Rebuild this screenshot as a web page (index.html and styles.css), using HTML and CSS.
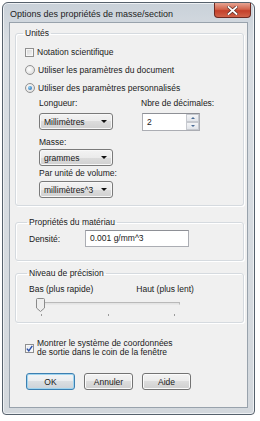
FILE: index.html
```html
<!DOCTYPE html>
<html lang="fr">
<head>
    <meta charset="UTF-8">
    <title>Options des propriétés de masse/section</title>
    <link rel="stylesheet" href="styles.css">
</head>
<body>
    <div class="window">
        <div class="titlebar">
            <span class="title">Options des propriétés de masse/section</span>
            <div class="close">
                <svg width="11" height="9" viewBox="0 0 11 9">
                    <path d="M1.5 1 L9.5 8 M9.5 1 L1.5 8" stroke="#5a2a22" stroke-width="3.2" stroke-linecap="square"/>
                    <path d="M1.5 1 L9.5 8 M9.5 1 L1.5 8" stroke="#fff" stroke-width="1.8" stroke-linecap="square"/>
                </svg>
            </div>
        </div>

        <div class="client">
            <fieldset class="group units">
                <legend>Unités</legend>
                <div class="option">
                    <span class="check"></span>
                    <span>Notation scientifique</span>
                </div>
                <div class="option">
                    <span class="radio"></span>
                    <span>Utiliser les paramètres du document</span>
                </div>
                <div class="option">
                    <span class="radio checked"></span>
                    <span>Utiliser des paramètres personnalisés</span>
                </div>

                <div class="custom">
                    <div class="col-left">
                        <div class="lbl lbl-first">Longueur:</div>
                        <div class="select select-first">Millimètres<span class="arrow"></span></div>
                        <div class="lbl lbl-mass">Masse:</div>
                        <div class="select select-mass">grammes<span class="arrow"></span></div>
                        <div class="lbl lbl-vol">Par unité de volume:</div>
                        <div class="select select-vol">millimètres^3<span class="arrow"></span></div>
                    </div>
                    <div class="col-right">
                        <div class="lbl lbl-first">Nbre de décimales:</div>
                        <div class="spin">
                            <span class="spin-value">2</span>
                            <div class="spin-btns">
                                <span class="spin-btn"><span class="tri-up"></span></span>
                                <span class="spin-btn"><span class="tri-down"></span></span>
                            </div>
                        </div>
                    </div>
                </div>
            </fieldset>

            <fieldset class="group material">
                <legend>Propriétés du matériau</legend>
                <div class="density-row">
                    <span class="density-label">Densité:</span>
                    <div class="textbox">0.001 g/mm^3</div>
                </div>
            </fieldset>

            <fieldset class="group precision">
                <legend>Niveau de précision</legend>
                <div class="slider-labels">
                    <span>Bas (plus rapide)</span>
                    <span class="slow">Haut (plus lent)</span>
                </div>
                <div class="slider">
                    <div class="track"></div>
                    <svg class="thumb" width="9" height="14" viewBox="0 0 9 14">
                        <path d="M0.5 1.5 Q0.5 0.5 1.5 0.5 H7.5 Q8.5 0.5 8.5 1.5 V10 L4.5 13.5 L0.5 10 Z" fill="#eeeeee" stroke="#8a8a8a"/>
                    </svg>
                    <span class="tick tick-1"></span>
                    <span class="tick tick-2"></span>
                    <span class="tick tick-3"></span>
                </div>
            </fieldset>

            <div class="show-axes">
                <span class="check checked">
                    <svg width="7" height="7" viewBox="0 0 7 7">
                        <path d="M0.8 3.6 L2.8 5.8 L6.3 0.8" fill="none" stroke="#2a4fa8" stroke-width="1.4"/>
                    </svg>
                </span>
                <span class="show-text">Montrer le système de coordonnées<br>de sortie dans le coin de la fenêtre</span>
            </div>

            <div class="buttons">
                <button class="btn btn-default">OK</button>
                <button class="btn">Annuler</button>
                <button class="btn">Aide</button>
            </div>
        </div>
    </div>
</body>
</html>
```

FILE: styles.css
```css
body {
    margin: 0;
    background-color: #ffffff;
    font-family: "Liberation Sans", Arial, sans-serif;
    font-size: 8.5px;
    color: #1a1a1a;
}

.window {
    margin: 2px 0 0 2px;
    width: 253px;
    height: 413px;
    box-sizing: border-box;
    padding: 0 6px 6px 6px;
    border: 1px solid #56616c;
    border-radius: 6px 6px 4px 4px;
    background: linear-gradient(#c9d1d9, #d9dee3 40px, #d3d8dd);
    box-shadow: inset 0 0 0 1px #eef1f4;
    display: flex;
    flex-direction: column;
}

.titlebar {
    height: 19px;
    flex-shrink: 0;
    position: relative;
    display: flex;
    align-items: center;
}

.title {
    margin-left: 1px;
    margin-top: 3px;
    font-size: 9px;
    color: #1d1d1d;
}

.close {
    position: absolute;
    top: 0;
    right: -3px;
    width: 37px;
    height: 15px;
    box-sizing: border-box;
    border: 1px solid #6e2a22;
    border-top: none;
    border-radius: 0 0 4px 4px;
    background: linear-gradient(#e7a492, #d1634b 45%, #c4402a 55%, #d0634a);
    display: flex;
    align-items: center;
    justify-content: center;
}

.client {
    flex: 1;
    background-color: #f0f0f0;
    border: 1px solid #98a2ac;
    display: flex;
    flex-direction: column;
}

.group {
    margin: 5px 3px 0 5px;
    padding: 0 8px 0 9px;
    border: 1px solid #d5dadf;
    border-radius: 3px;
    box-shadow: inset 1px 1px 0 #ffffff, 1px 1px 0 #ffffff;
    min-width: 0;
}

.group legend {
    padding: 0 2px;
    margin-left: -2px;
    line-height: 10px;
    color: #1a1a1a;
}

.units {
    padding-top: 5px;
    padding-bottom: 7px;
}

.option {
    height: 18px;
    display: flex;
    align-items: center;
    gap: 3px;
}

.check {
    width: 9px;
    height: 9px;
    box-sizing: border-box;
    border: 1px solid #8f8f8f;
    background: linear-gradient(135deg, #d6d6d6, #f4f4f4);
    box-shadow: inset 0 0 0 1px #f7f7f7;
    flex-shrink: 0;
    display: flex;
    align-items: center;
    justify-content: center;
}

.check.checked {
    background: linear-gradient(135deg, #dfe5ee, #ffffff);
}

.radio {
    width: 10px;
    height: 10px;
    box-sizing: border-box;
    border: 1px solid #929292;
    border-radius: 50%;
    background: radial-gradient(circle at 40% 40%, #ffffff, #d4d4d4);
    flex-shrink: 0;
    position: relative;
}

.radio.checked::after {
    content: "";
    position: absolute;
    left: 2px;
    top: 2px;
    width: 4px;
    height: 4px;
    border-radius: 50%;
    background: radial-gradient(circle at 35% 35%, #8fd0f5, #1b5fa8);
}

.custom {
    display: flex;
    margin-left: 14px;
}

.col-left {
    width: 102px;
    display: flex;
    flex-direction: column;
}

.col-right {
    display: flex;
    flex-direction: column;
}

.lbl {
    line-height: 10px;
}

.lbl-first {
    margin-top: 1px;
}

.lbl-mass {
    margin-top: 7px;
}

.lbl-vol {
    margin-top: 2px;
}

.select {
    width: 74px;
    height: 17px;
    box-sizing: border-box;
    border: 1px solid #7a7a7a;
    border-radius: 3px;
    background: linear-gradient(#f3f3f3, #ebebeb 50%, #dcdcdc 50%, #d0d0d0);
    box-shadow: inset 0 0 0 1px #f8f8f8;
    padding-left: 4px;
    display: flex;
    align-items: center;
    position: relative;
}

.select-first {
    margin-top: 5px;
}

.select-mass {
    margin-top: 2px;
}

.select-vol {
    margin-top: 3px;
}

.arrow {
    position: absolute;
    right: 5px;
    top: 6px;
    border-left: 3px solid transparent;
    border-right: 3px solid transparent;
    border-top: 3px solid #111111;
}

.spin {
    margin-top: 5px;
    margin-left: 1px;
    width: 58px;
    height: 18px;
    box-sizing: border-box;
    border: 1px solid #abadb3;
    border-top-color: #8e9096;
    background-color: #ffffff;
    display: flex;
}

.spin-value {
    flex: 1;
    padding-left: 4px;
    line-height: 16px;
}

.spin-btns {
    width: 13px;
    display: flex;
    flex-direction: column;
}

.spin-btn {
    flex: 1;
    border: 1px solid #c6c9cf;
    background: linear-gradient(#f4f5f7, #e2e5ea);
    display: flex;
    align-items: center;
    justify-content: center;
}

.tri-up {
    border-left: 2px solid transparent;
    border-right: 2px solid transparent;
    border-bottom: 2px solid #4a6c96;
}

.tri-down {
    border-left: 2px solid transparent;
    border-right: 2px solid transparent;
    border-top: 2px solid #4a6c96;
}

.material {
    margin-top: 11px;
    padding-top: 3px;
    padding-bottom: 13px;
    padding-left: 13px;
}

.density-row {
    display: flex;
    align-items: center;
}

.density-label {
    width: 56px;
}

.textbox {
    width: 104px;
    height: 17px;
    box-sizing: border-box;
    border: 1px solid #abadb3;
    border-top-color: #8e9096;
    background-color: #ffffff;
    padding-left: 4px;
    line-height: 15px;
}

.precision {
    margin-top: 7px;
    padding-top: 6px;
    padding-bottom: 4px;
    padding-left: 13px;
}

.slider-labels {
    line-height: 10px;
    display: flex;
}

.slider-labels .slow {
    margin-left: 43px;
}

.slider {
    position: relative;
    margin-left: 7px;
    width: 146px;
    height: 24px;
}

.track {
    position: absolute;
    left: 3px;
    top: 8px;
    width: 139px;
    height: 1px;
    border: 1px solid #b9b9b9;
    border-bottom-color: #e9e9e9;
    background-color: #e4e4e4;
}

.thumb {
    position: absolute;
    left: 0;
    top: 4px;
}

.tick {
    position: absolute;
    top: 20px;
    width: 1px;
    height: 2px;
    background-color: #9a9a9a;
}

.tick-1 {
    left: 5px;
}

.tick-2 {
    left: 72px;
}

.tick-3 {
    left: 138px;
}

.show-axes {
    margin-top: 16px;
    padding-left: 15px;
    display: flex;
    align-items: center;
    gap: 3px;
}

.show-text {
    line-height: 9px;
}

.buttons {
    margin-top: 16px;
    padding-left: 16px;
    display: flex;
    gap: 9px;
}

.btn {
    width: 49px;
    height: 17px;
    box-sizing: border-box;
    padding: 0;
    font-family: "Liberation Sans", Arial, sans-serif;
    font-size: 8.5px;
    color: #1a1a1a;
    border: 1px solid #737373;
    border-radius: 3px;
    background: linear-gradient(#f3f3f3, #ebebeb 50%, #dddddd 50%, #cfcfcf);
    box-shadow: inset 0 0 0 1px #fbfbfb;
}

.btn-default {
    border-color: #3c7fb1;
    box-shadow: inset 0 0 0 1px #9fd4ef;
    background: linear-gradient(#f2f4f6, #e9ecef 50%, #dadee2 50%, #ccd2d8);
}
```
